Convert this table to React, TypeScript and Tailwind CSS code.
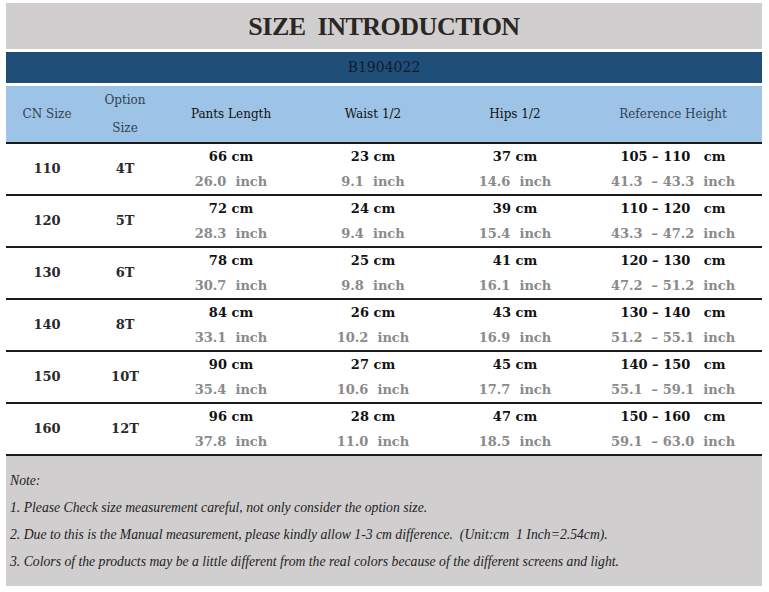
const rows = [
  { cn: "110", opt: "4T", pants: ["66 cm", "26.0  inch"], waist: ["23 cm", "9.1  inch"], hips: ["37 cm", "14.6  inch"], ref: ["105 – 110   cm", "41.3  – 43.3  inch"] },
  { cn: "120", opt: "5T", pants: ["72 cm", "28.3  inch"], waist: ["24 cm", "9.4  inch"], hips: ["39 cm", "15.4  inch"], ref: ["110 – 120   cm", "43.3  – 47.2  inch"] },
  { cn: "130", opt: "6T", pants: ["78 cm", "30.7  inch"], waist: ["25 cm", "9.8  inch"], hips: ["41 cm", "16.1  inch"], ref: ["120 – 130   cm", "47.2  – 51.2  inch"] },
  { cn: "140", opt: "8T", pants: ["84 cm", "33.1  inch"], waist: ["26 cm", "10.2  inch"], hips: ["43 cm", "16.9  inch"], ref: ["130 – 140   cm", "51.2  – 55.1  inch"] },
  { cn: "150", opt: "10T", pants: ["90 cm", "35.4  inch"], waist: ["27 cm", "10.6  inch"], hips: ["45 cm", "17.7  inch"], ref: ["140 – 150   cm", "55.1  – 59.1  inch"] },
  { cn: "160", opt: "12T", pants: ["96 cm", "37.8  inch"], waist: ["28 cm", "11.0  inch"], hips: ["47 cm", "18.5  inch"], ref: ["150 – 160   cm", "59.1  – 63.0  inch"] },
];

const cols = "grid grid-cols-[82px_74px_138px_146px_138px_178px]";

function Pair({ v }: { v: string[] }) {
  return (
    <div className="flex flex-col items-center">
      <div className="h-[25px] flex items-center whitespace-pre text-[#111]">{v[0]}</div>
      <div className="h-[25px] flex items-center whitespace-pre text-[#8a8a8a]">{v[1]}</div>
    </div>
  );
}

export default function App() {
  return (
    <div className="w-[769px] h-[592px] bg-white pt-[3px] pl-[6px] overflow-hidden">
      <div className="w-[756px] flex flex-col">
        <div className="h-[46px] bg-[#d0cecf] flex items-center justify-center">
          <h1 className="font-['Liberation_Serif',serif] font-bold text-[26px] tracking-[-0.5px] text-[#2a2622] whitespace-pre">
            SIZE  INTRODUCTION
          </h1>
        </div>
        <div className="mt-[3px] h-[31px] bg-[#1f4e79] flex items-center justify-center">
          <span className="font-['DejaVu_Serif',serif] text-[14px] text-[#101c28]">B1904022</span>
        </div>
        <div className={`mt-[3px] h-[58px] bg-[#9dc3e6] border-b-2 border-[#1a1a1a] ${cols} items-center text-center font-['DejaVu_Serif',serif] text-[12px]`}>
          <div className="text-[#34404f]">CN Size</div>
          <div className="text-[#34404f] leading-[28px]">
            Option
            <br />
            Size
          </div>
          <div className="text-[#111]">Pants Length</div>
          <div className="text-[#111]">Waist 1/2</div>
          <div className="text-[#111]">Hips 1/2</div>
          <div className="text-[#34404f]">Reference Height</div>
        </div>
        {rows.map((r) => (
          <div
            key={r.cn}
            className={`${cols} h-[52px] border-b-2 border-[#1a1a1a] items-center text-center font-['DejaVu_Serif',serif] font-bold text-[13px]`}
          >
            <div className="text-[#2a2a2a]">{r.cn}</div>
            <div className="text-[#2a2a2a]">{r.opt}</div>
            <Pair v={r.pants} />
            <Pair v={r.waist} />
            <Pair v={r.hips} />
            <Pair v={r.ref} />
          </div>
        ))}
        <div className="h-[130px] bg-[#d0cecf] px-[4px] pt-[11px] font-['Liberation_Serif',serif] italic text-[13.7px] text-[#222] leading-[27px]">
          <p>Note:</p>
          <p>1. Please Check size measurement careful, not only consider the option size.</p>
          <p className="whitespace-pre">2. Due to this is the Manual measurement, please kindly allow 1-3 cm difference.  (Unit:cm  1 Inch=2.54cm).</p>
          <p>3. Colors of the products may be a little different from the real colors because of the different screens and light.</p>
        </div>
      </div>
    </div>
  );
}
